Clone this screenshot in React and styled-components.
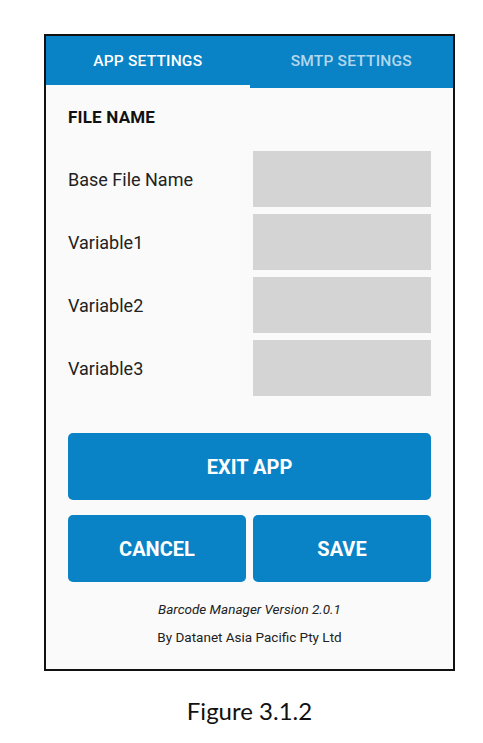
import React, { useState } from "react"
import styled, { createGlobalStyle } from "styled-components"

const BLUE = "#0a82c6"

const GlobalStyle = createGlobalStyle`
  html, body {
    margin: 0;
    padding: 0;
    background: #ffffff;
  }
  * {
    box-sizing: border-box;
  }
`

const Page = styled.div`
  width: 483px;
  height: 743px;
  padding: 34px 0 0 44px;
  font-family: Roboto, "Liberation Sans", sans-serif;
`

const Frame = styled.div`
  width: 411px;
  border: 2px solid #111111;
  background: #fafafa;
`

const TabBar = styled.div`
  display: flex;
  height: 52px;
  background: ${BLUE};
`

const Tab = styled.div`
  flex: 1;
  display: flex;
  align-items: center;
  justify-content: center;
  font-size: 15.5px;
  font-weight: 500;
  letter-spacing: 0.2px;
  color: ${({ $active }) => ($active ? "#ffffff" : "rgba(255, 255, 255, 0.7)")};
  border-bottom: 3px solid ${({ $active }) => ($active ? "#fafafa" : BLUE)};
  padding-top: 1px;
  cursor: pointer;
`

const Content = styled.div`
  padding: 0 22px 18px;
`

const SectionTitle = styled.h3`
  margin: 20px 0 24px;
  font-size: 17px;
  font-weight: 700;
  line-height: 19px;
  letter-spacing: 0.2px;
  color: #111111;
`

const Fields = styled.div`
  display: grid;
  grid-template-columns: 1fr 1fr;
  grid-auto-rows: 56px;
  gap: 7px;
`

const Label = styled.label`
  display: flex;
  align-items: center;
  font-size: 18px;
  color: #222222;
`

const Input = styled.input`
  width: 100%;
  height: 100%;
  border: none;
  outline: none;
  background: #d4d4d4;
  padding: 0 10px;
  font-family: inherit;
  font-size: 16px;
`

const Actions = styled.div`
  display: flex;
  flex-direction: column;
  gap: 15px;
  margin-top: 37px;
`

const ButtonRow = styled.div`
  display: grid;
  grid-template-columns: 1fr 1fr;
  gap: 7px;
`

const Button = styled.button`
  height: 67px;
  border: none;
  border-radius: 5px;
  background: ${BLUE};
  color: #ffffff;
  font-family: inherit;
  font-size: 20px;
  font-weight: 700;
  cursor: pointer;
`

const Footer = styled.div`
  margin-top: 13px;
  text-align: center;
  font-size: 13.5px;
  line-height: 28px;
  color: #222222;
`

const Version = styled.div`
  font-style: italic;
`

const Caption = styled.div`
  width: 411px;
  margin-top: 25px;
  text-align: center;
  font-family: Lato, "Open Sans", sans-serif;
  font-size: 24px;
  color: #111111;
`

const fields = ["Base File Name", "Variable1", "Variable2", "Variable3"]

const App = () => {
  const [tab, setTab] = useState("app")

  return (
    <Page>
      <GlobalStyle />
      <Frame>
        <TabBar>
          <Tab $active={tab === "app"} onClick={() => setTab("app")}>
            APP SETTINGS
          </Tab>
          <Tab $active={tab === "smtp"} onClick={() => setTab("smtp")}>
            SMTP SETTINGS
          </Tab>
        </TabBar>
        <Content>
          <SectionTitle>FILE NAME</SectionTitle>
          <Fields>
            {fields.map(name => (
              <React.Fragment key={name}>
                <Label>{name}</Label>
                <Input aria-label={name} />
              </React.Fragment>
            ))}
          </Fields>
          <Actions>
            <Button>EXIT APP</Button>
            <ButtonRow>
              <Button>CANCEL</Button>
              <Button>SAVE</Button>
            </ButtonRow>
          </Actions>
          <Footer>
            <Version>Barcode Manager Version 2.0.1</Version>
            <div>By Datanet Asia Pacific Pty Ltd</div>
          </Footer>
        </Content>
      </Frame>
      <Caption>Figure 3.1.2</Caption>
    </Page>
  )
}

export default App
